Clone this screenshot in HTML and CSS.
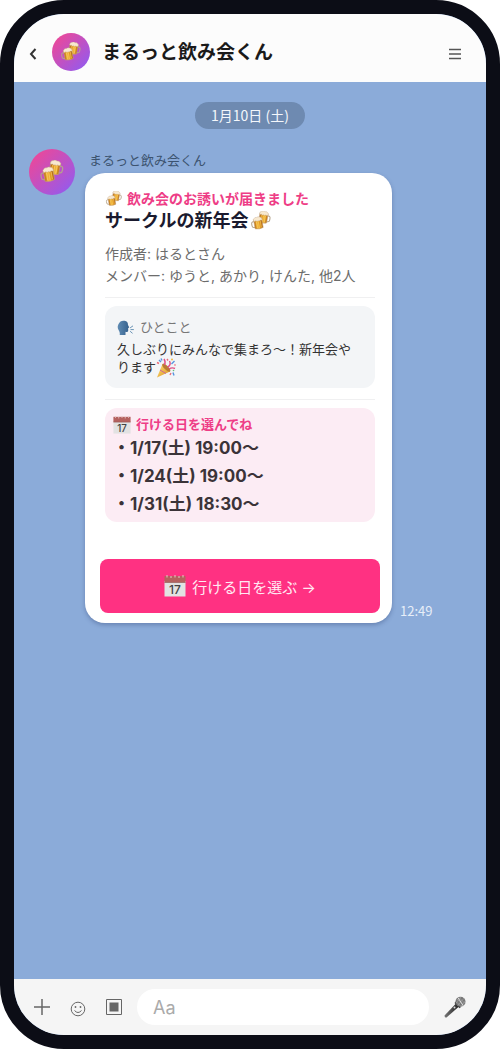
FILE: index.html
```html
<!DOCTYPE html>
<html lang="ja">
<head>
<meta charset="utf-8">
<meta name="viewport" content="width=device-width, initial-scale=1">
<title>まるっと飲み会くん</title>
<link rel="stylesheet" href="styles.css">
</head>
<body>
<svg class="sprite" aria-hidden="true">
  <defs>
    <linearGradient id="beer" x1="0" x2="1"><stop offset="0" stop-color="#b9680c"/><stop offset=".35" stop-color="#f3b93c"/><stop offset=".7" stop-color="#e0951c"/><stop offset="1" stop-color="#a95c0a"/></linearGradient>
    <linearGradient id="cone" x1="0" y1="0" x2="1" y2="1"><stop offset="0" stop-color="#ffe27a"/><stop offset="1" stop-color="#d9901c"/></linearGradient>
    <linearGradient id="head" x1="0" x2="1"><stop offset="0" stop-color="#5f8bb3"/><stop offset="1" stop-color="#335f8c"/></linearGradient>
    <linearGradient id="grip" x1="0" y1="0" x2="1" y2="0"><stop offset="0" stop-color="#777"/><stop offset="1" stop-color="#222"/></linearGradient>
    <g id="mug">
      <path d="M2 7.500H0Q-3.500 7.500-3.500 11v3q0 3.500 3.500 3.500h2" fill="none" stroke="#b5a48c" stroke-width="1.800"/>
      <path d="M1 4h14v16q-7 2.500-14 0z" fill="url(#beer)" stroke="#c4a279" stroke-width="1"/>
      <path d="M5 8v11.500M8.500 8v12M12 8v11" stroke="#ffdc7c" stroke-width=".8"/>
      <path d="M.8 6.500Q-.6 3.500 2 2.300 3.500 0 6.500 1 9.500-.5 12 1.200q4 .3 3.600 5Q14 8 12 6.500 10.500 9 8.500 7 6.500 8.500 4.500 6.500 2.500 8 .8 6.500z" fill="#f8e9cf" stroke="#bfa689" stroke-width=".6"/>
    </g>
    <symbol id="beers" viewBox="0 0 38 34">
      <use href="#mug" transform="translate(33 1) rotate(10) scale(-1 1)"/>
      <use href="#mug" transform="translate(4.500 11) rotate(-10)"/>
    </symbol>
    <symbol id="calendar" viewBox="0 0 22 22">
      <path d="M.5 6h21v15.500H.5z" fill="#e2e2e2"/>
      <path d="M.5 1h21v6.500H.5z" fill="#b5615f"/>
      <path d="M3 0v2.500M7 1v2M11 0v2.500M15 1v2M19 0v2.500" stroke="#e7c8c6" stroke-width="1"/>
      <path d="M.5 7.500h21" stroke="#8e5553" stroke-width=".6"/>
      <text class="calendar-day" x="11" y="19" text-anchor="middle">17</text>
    </symbol>
    <symbol id="speaking" viewBox="0 0 20 18">
      <path d="M3 18q.6-3-1-5.500Q-.5 9 1.500 5 4 0 9 1q4 .7 4 5l1.500 3-1.300.7v3.500q-.4 1.600-3.200.8v4z" fill="url(#head)"/>
      <path d="M15.500 9.500l3.500-2.500M16 11.500h4M15.500 13.500l3 2.500" stroke="#6a93b5" stroke-width="1.200"/>
    </symbol>
    <symbol id="popper" viewBox="0 0 20 20">
      <path d="M1 19.500L6.500 6Q12 7 14 13.500z" fill="url(#cone)"/>
      <path d="M4 12l6 3.500" stroke="#c9679b" stroke-width="1"/>
      <ellipse cx="10.300" cy="9.700" rx="5.300" ry="2" transform="rotate(45 10.300 9.700)" fill="#b87c34"/>
      <path d="M8.500 7Q10 4 8 1M11.500 9q4-2 2-6M13 11q3-2 6-.5" fill="none" stroke="#e14f86" stroke-width="1.400"/>
      <path d="M3 2l2 2M5 .5l1 2M15.500 6l3-3M17 14.500l1 3" stroke="#5794df" stroke-width="1.400"/>
      <path d="M1 4.500l2 1M11 1l1 1.500M18.500 6.500l1 1M15 15l-1 2" stroke="#ea6a78" stroke-width="1.400"/>
      <circle cx="16" cy="1.500" r="1" fill="#f1bd45"/><circle cx="17.500" cy="12.500" r=".8" fill="#68bc7c"/>
    </symbol>
    <symbol id="mic" viewBox="0 0 22 22">
      <path d="M.5 19.500L12 7.500l3 3L2.500 21.500Q.5 22 .5 19.500z" fill="url(#grip)"/>
      <path d="M10.500 7l5 5.300 1.500-1.300-5.200-5.500z" fill="#3f3f3f"/>
      <circle cx="16.500" cy="5.700" r="5" fill="#777"/>
      <path d="M13 3l6.500 6M15 1.500l6 6M12.500 6l4.500 4.500M20 2.200l-6 7M17 1l-5 6M21.300 5l-4 5" stroke="#b5b5b5" stroke-width=".5"/>
      <path d="M14 1.700l5.500 8.500" stroke="#ddd" stroke-width="1"/>
      <circle cx="10.500" cy="11.500" r="1" fill="#ddd"/>
    </symbol>
  </defs>
</svg>

<div class="phone">
  <header class="topbar">
    <button class="icon-button back" aria-label="戻る"><svg width="8" height="12" viewBox="0 0 8 12"><path d="M6.500 1L2 6l4.500 5" fill="none" stroke="currentColor" stroke-width="2"/></svg></button>
    <span class="avatar avatar-small"><svg width="22" height="20" aria-hidden="true"><use href="#beers"/></svg></span>
    <h1 class="topbar-title">まるっと飲み会くん</h1>
    <button class="icon-button menu" aria-label="メニュー"><svg width="12" height="12" viewBox="0 0 12 12"><path d="M0 1.500h12M0 6h12M0 10.500h12" stroke="currentColor" stroke-width="1.500"/></svg></button>
  </header>

  <main class="chat">
    <time class="date-pill">1月10日 (土)</time>
    <article class="message">
      <span class="avatar"><svg width="26" height="24" aria-hidden="true"><use href="#beers"/></svg></span>
      <div class="message-body">
        <p class="sender">まるっと飲み会くん</p>
        <div class="bubble-row">
          <section class="card">
            <div class="card-content">
              <p class="eyebrow"><svg width="18" height="16" aria-hidden="true"><use href="#beers"/></svg>飲み会のお誘いが届きました</p>
              <h2 class="card-title">サークルの新年会<svg width="22" height="20" aria-hidden="true"><use href="#beers"/></svg></h2>
              <div class="meta">
                <p>作成者: はるとさん</p>
                <p>メンバー: ゆうと, あかり, けんた, 他2人</p>
              </div>
              <div class="comment">
                <p class="comment-label"><svg width="17" height="15" aria-hidden="true"><use href="#speaking"/></svg>ひとこと</p>
                <p class="comment-text">久しぶりにみんなで集まろ〜！新年会やります<svg width="20" height="20" aria-hidden="true"><use href="#popper"/></svg></p>
              </div>
              <hr class="divider">
              <div class="dates">
                <h3 class="dates-label"><svg width="18" height="18" aria-hidden="true"><use href="#calendar"/></svg>行ける日を選んでね</h3>
                <ul class="date-list">
                  <li>1/17(土) 19:00〜</li>
                  <li>1/24(土) 19:00〜</li>
                  <li>1/31(土) 18:30〜</li>
                </ul>
              </div>
            </div>
            <button class="choose"><svg width="22" height="22" aria-hidden="true"><use href="#calendar"/></svg>行ける日を選ぶ →</button>
          </section>
          <time class="sent-at">12:49</time>
        </div>
      </div>
    </article>
  </main>

  <footer class="composer">
    <div class="tools">
      <button class="icon-button" aria-label="追加"><svg width="16" height="16" viewBox="0 0 16 16"><path d="M8 0v16M0 8h16" stroke="currentColor" stroke-width="1.500"/></svg></button>
      <button class="icon-button smile" aria-label="スタンプ"><svg width="16" height="16" viewBox="0 0 16 16"><circle cx="8" cy="8" r="6.800" fill="none" stroke="currentColor"/><path d="M4.500 9.500q3.500 4 7 0" fill="none" stroke="currentColor"/><circle cx="5.500" cy="6" r=".9" fill="currentColor"/><circle cx="10.500" cy="6" r=".9" fill="currentColor"/></svg></button>
      <button class="icon-button" aria-label="画像"><svg width="16" height="16" viewBox="0 0 16 16"><path d="M.5.5h15v15H.5z" fill="none" stroke="currentColor"/><path d="M3.500 3.500h9v9h-9z" fill="currentColor"/></svg></button>
    </div>
    <input class="message-input" type="text" placeholder="Aa" aria-label="メッセージ">
    <button class="icon-button" aria-label="音声入力"><svg width="22" height="22"><use href="#mic"/></svg></button>
  </footer>
</div>
</body>
</html>
```
FILE: styles.css
```css
* {
  box-sizing: border-box;
}

body,
h1,
h2,
h3,
p,
ul {
  margin: 0;
  padding: 0;
}

body {
  background: #fff;
  font-family: Inter, "Noto Sans CJK JP", sans-serif;
}

button,
input {
  font-family: inherit;
}

svg {
  flex: none;
}

.sprite {
  position: absolute;
  width: 0;
  height: 0;
}

.calendar-day {
  font-size: 12px;
  font-weight: 500;
  fill: #444;
}

.phone {
  display: flex;
  flex-direction: column;
  min-height: 100vh;
  overflow: hidden;
  border: 14px solid #0c0d16;
  border-radius: 64px;
  background: #8babd9;
}

.icon-button {
  display: flex;
  padding: 0;
  border: 0;
  background: none;
  color: #666;
}

.avatar {
  display: flex;
  flex: none;
  align-items: center;
  justify-content: center;
  width: 46px;
  height: 46px;
  border-radius: 50%;
  background: linear-gradient(135deg, #ec4899 10%, #8b5cf6 100%);
}

.avatar-small {
  width: 38px;
  height: 38px;
}

.topbar {
  display: flex;
  align-items: center;
  height: 68px;
  padding: 8px 25px 0 15px;
  background: #fcfcfc;
}

.back {
  margin-right: 15px;
  padding-top: 4px;
  color: #333;
}

.topbar-title {
  flex: 1;
  margin-left: 12px;
  padding-top: 2px;
  color: #1a1a1a;
  font-size: 19px;
  line-height: 28px;
}

.menu {
  padding-top: 4px;
  color: #555;
}

.chat {
  display: flex;
  flex: 1;
  flex-direction: column;
  gap: 20px;
  padding: 20px 15px;
}

.date-pill {
  align-self: center;
  padding: 0 16px;
  border-radius: 14px;
  background: #6e8ab1;
  color: #f4f7fb;
  font-family: "Noto Sans CJK JP", sans-serif;
  font-size: 14px;
  line-height: 27px;
}

.message {
  display: flex;
  gap: 10px;
}

.message-body {
  flex: 1;
  min-width: 0;
}

.sender {
  padding-left: 4px;
  color: #3c536f;
  font-size: 13px;
  line-height: 22px;
}

.bubble-row {
  display: flex;
  align-items: flex-end;
  gap: 8px;
  margin-top: 2px;
}

.card {
  flex: 1;
  max-width: 307px;
  padding: 16px 12px 10px 15px;
  border-radius: 20px;
  background: #fff;
  box-shadow: 0 2px 4px rgba(40, 60, 110, 0.35);
}

.card-content {
  padding: 0 5px;
}

.eyebrow,
.card-title,
.comment-label,
.dates-label {
  display: flex;
  align-items: center;
}

.eyebrow {
  gap: 4px;
  color: #ee3d86;
  font-size: 14px;
  font-weight: 700;
  line-height: 20px;
}

.card-title {
  gap: 2px;
  color: #1a1a2e;
  font-size: 18px;
  line-height: 24px;
}

.meta {
  margin-top: 10px;
  padding-bottom: 10px;
  border-bottom: 1px solid #f0f0f1;
  color: #6c6c6c;
  font-size: 14px;
  line-height: 22px;
}

.comment {
  margin-top: 8px;
  padding: 11px 12px 12px;
  border-radius: 12px;
  background: #f3f5f7;
}

.comment-label {
  gap: 6px;
  color: #777;
  font-size: 13px;
  line-height: 20px;
}

.comment-text {
  margin-top: 3px;
  color: #333;
  font-size: 13px;
  line-height: 18px;
}

.comment-text svg {
  margin: -4px 0;
  vertical-align: middle;
}

.divider {
  height: 1px;
  margin: 11px 0 8px;
  border: 0;
  background: #f0f0f1;
}

.dates {
  padding: 7px 8px 4px;
  border-radius: 12px;
  background: #fcecf4;
}

.dates-label {
  gap: 5px;
  color: #ee3d86;
  font-size: 13px;
  line-height: 19px;
}

.date-list {
  color: #3b3338;
  font-size: 17px;
  font-weight: 700;
  line-height: 28px;
  list-style: none;
}

.date-list li::before {
  content: "・";
}

.choose {
  display: flex;
  align-items: center;
  justify-content: center;
  gap: 6px;
  width: 100%;
  height: 54px;
  margin-top: 37px;
  border: 0;
  border-radius: 8px;
  background: #ff3182;
  color: #ffe9f2;
  font-size: 15px;
}

.sent-at {
  color: #e7eef8;
  font-family: "Noto Sans CJK JP", sans-serif;
  font-size: 13px;
  line-height: 24px;
}

.composer {
  display: flex;
  align-items: center;
  gap: 15px;
  height: 56px;
  padding: 0 20px;
  background: #f5f5f5;
}

.tools {
  display: flex;
  align-items: center;
  gap: 20px;
}

.smile {
  padding-top: 4px;
}

.message-input {
  flex: 1;
  min-width: 0;
  height: 36px;
  padding: 0 16px;
  border: 0;
  border-radius: 18px;
  background: #fff;
  color: #333;
  font-size: 18px;
}

.message-input::placeholder {
  color: #aaa;
}
```
